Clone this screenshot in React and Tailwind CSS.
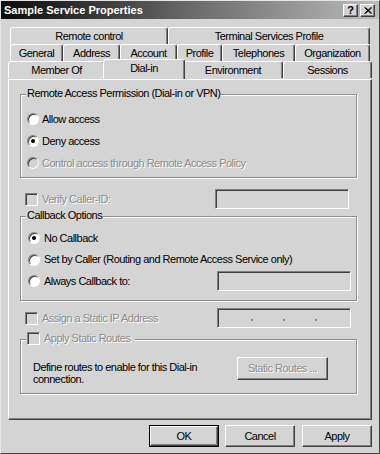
import React from "react";

const DIS = "text-[#8c8c8c] [text-shadow:1px_1px_0_#ffffff]";
const SUNK =
  "border border-t-[#808080] border-l-[#808080] border-r-white border-b-white shadow-[inset_1px_1px_0_#404040]";

function Radio({ checked, disabled }) {
  return (
    <span
      className={
        "w-[12px] h-[12px] shrink-0 rounded-full flex items-center justify-center " +
        SUNK +
        (disabled ? " bg-[#d4d4d4]" : " bg-white")
      }
    >
      {checked && <span className="w-[4px] h-[4px] rounded-full bg-black" />}
    </span>
  );
}

function Check() {
  return <span className={"w-[13px] h-[13px] shrink-0 bg-[#d4d4d4] " + SUNK} />;
}

function Field({ className, children }) {
  return (
    <div className={"h-[20px] w-[134px] shrink-0 bg-[#d4d4d4] " + SUNK + " " + className}>
      {children}
    </div>
  );
}

function Btn({ children, disabled, className }) {
  return (
    <div
      className={
        "flex items-center justify-center border border-t-white border-l-white border-r-[#404040] border-b-[#404040] shadow-[inset_-1px_-1px_0_#808080] " +
        (disabled ? DIS + " " : "") +
        className
      }
    >
      {children}
    </div>
  );
}

function Tab({ label, className }) {
  return (
    <div
      className={
        "h-[17px] shrink-0 flex items-center justify-center border-t border-l border-r border-t-white border-l-white border-r-[#404040] rounded-t-[3px] shadow-[inset_-1px_0_0_#808080] " +
        className
      }
    >
      {label}
    </div>
  );
}

function Group({ label, className, children }) {
  return (
    <div
      className={
        "relative border border-[#8c8c8c] shadow-[1px_1px_0_#ffffff,inset_1px_1px_0_#ffffff] " +
        className
      }
    >
      <div className="absolute left-[5px] -top-[8px] bg-[#d4d4d4] px-[1px] flex items-center gap-[4px]">
        {label}
      </div>
      {children}
    </div>
  );
}

export default function App() {
  return (
    <div className="w-[380px] h-[454px] bg-[#d4d4d4] font-['Liberation_Sans',Arial,sans-serif] text-[11px] tracking-[-0.5px] leading-[13px] text-black border border-t-[#e6e6e6] border-l-[#e6e6e6] border-r-[#404040] border-b-[#404040] flex flex-col overflow-hidden">
      {/* Title bar */}
      <div className="h-[18px] shrink-0 flex items-center justify-between bg-gradient-to-r from-[#0c0c0c] via-[#6a6a6a] to-[#bcbcbc] pl-[3px] pr-[4px]">
        <span className="text-white font-bold tracking-normal">Sample Service Properties</span>
        <div className="flex gap-[2px]">
          <div className="w-[15px] h-[13px] flex items-center justify-center bg-[#d4d4d4] border border-t-white border-l-white border-r-[#404040] border-b-[#404040] shadow-[inset_-1px_-1px_0_#808080] font-bold text-[11px] tracking-normal leading-none">
            ?
          </div>
          <div className="w-[15px] h-[13px] flex items-center justify-center bg-[#d4d4d4] border border-t-white border-l-white border-r-[#404040] border-b-[#404040] shadow-[inset_-1px_-1px_0_#808080]">
            <svg width="8" height="7" viewBox="0 0 8 7">
              <path d="M0.5 0.5 L7 6.5 M1.5 0.5 L8 6.5 M7 0.5 L0.5 6.5 M8 0.5 L1.5 6.5" stroke="#000" strokeWidth="1" />
            </svg>
          </div>
        </div>
      </div>

      {/* Tabs */}
      <div className="mt-[8px] flex flex-col">
        <div className="ml-[9px] w-[360px] flex">
          <Tab label="Remote control" className="w-[158px]" />
          <Tab label="Terminal Services Profile" className="w-[202px]" />
        </div>
        <div className="ml-[9px] w-[360px] flex">
          <Tab label="General" className="w-[53px]" />
          <Tab label="Address" className="w-[57px]" />
          <Tab label="Account" className="w-[57px]" />
          <Tab label="Profile" className="w-[45px]" />
          <Tab label="Telephones" className="w-[73px]" />
          <Tab label="Organization" className="w-[75px]" />
        </div>
        <div className="ml-[7px] w-[364px] flex items-start">
          <Tab label="Member Of" className="w-[97px]" />
          <Tab
            label="Dial-in"
            className="w-[82px] -mx-[2px] !h-[20px] -mt-[2px] relative z-10 bg-[#d4d4d4] pb-[3px]"
          />
          <Tab label="Environment" className="w-[100px]" />
          <Tab label="Sessions" className="w-[89px]" />
        </div>
      </div>

      {/* Panel */}
      <div className="ml-[7px] w-[364px] h-[341px] shrink-0 border border-t-white border-l-white border-r-[#404040] border-b-[#404040] shadow-[inset_-1px_-1px_0_#808080] px-[11px] flex flex-col">
        <Group label={<span>Remote Access Permission (Dial-in or VPN)</span>} className="mt-[14px] w-[337px] pt-[13px] pb-[3px] pl-[6px] flex flex-col">
          <div className="h-[22px] flex items-center gap-[3px]">
            <Radio />
            <span>Allow access</span>
          </div>
          <div className="h-[22px] flex items-center gap-[3px]">
            <Radio checked />
            <span>Deny access</span>
          </div>
          <div className="h-[22px] flex items-center gap-[3px]">
            <Radio disabled />
            <span className={DIS}>Control access through Remote Access Policy</span>
          </div>
        </Group>

        <div className="mt-[11px] w-[337px] h-[20px] pl-[5px] pr-[8px] flex items-center">
          <Check />
          <span className={"ml-[4px] " + DIS}>Verify Caller-ID:</span>
          <Field className="ml-auto" />
        </div>

        <Group label={<span>Callback Options</span>} className="mt-[7px] w-[337px] pt-[10px] pb-[8px] pl-[7px] pr-[5px] flex flex-col">
          <div className="h-[22px] flex items-center gap-[4px]">
            <Radio checked />
            <span>No Callback</span>
          </div>
          <div className="h-[21px] flex items-center gap-[4px]">
            <Radio />
            <span>Set by Caller (Routing and Remote Access Service only)</span>
          </div>
          <div className="h-[22px] flex items-center gap-[4px]">
            <Radio />
            <span>Always Callback to:</span>
            <Field className="ml-auto" />
          </div>
        </Group>

        <div className="mt-[7px] w-[337px] h-[20px] pl-[5px] pr-[6px] flex items-center">
          <Check />
          <span className={"ml-[4px] " + DIS}>Assign a Static IP Address</span>
          <Field className="ml-auto flex items-start pt-[10px] pl-[33px] gap-[30px]">
            <span className="w-[2px] h-[2px] bg-[#8c8c8c]" />
            <span className="w-[2px] h-[2px] bg-[#8c8c8c]" />
            <span className="w-[2px] h-[2px] bg-[#8c8c8c]" />
          </Field>
        </div>

        <Group
          label={
            <>
              <Check />
              <span className={DIS + " pr-[3px]"}>Apply Static Routes</span>
            </>
          }
          className="mt-[11px] w-[337px] pt-[17px] pb-[8px] pl-[12px] flex items-start"
        >
          <div className="mt-[4px] w-[180px] leading-[12px]">
            Define routes to enable for this Dial-in connection.
          </div>
          <Btn disabled className="ml-[24px] w-[91px] h-[23px]">
            Static Routes ...
          </Btn>
        </Group>
      </div>

      {/* Bottom buttons */}
      <div className="mt-[5px] pr-[7px] flex justify-end gap-[6px]">
        <div className="w-[70px] h-[22px] border border-black flex">
          <Btn className="flex-1">OK</Btn>
        </div>
        <Btn className="w-[70px] h-[22px]">Cancel</Btn>
        <Btn className="w-[70px] h-[22px] ml-[1px]">Apply</Btn>
      </div>
    </div>
  );
}
